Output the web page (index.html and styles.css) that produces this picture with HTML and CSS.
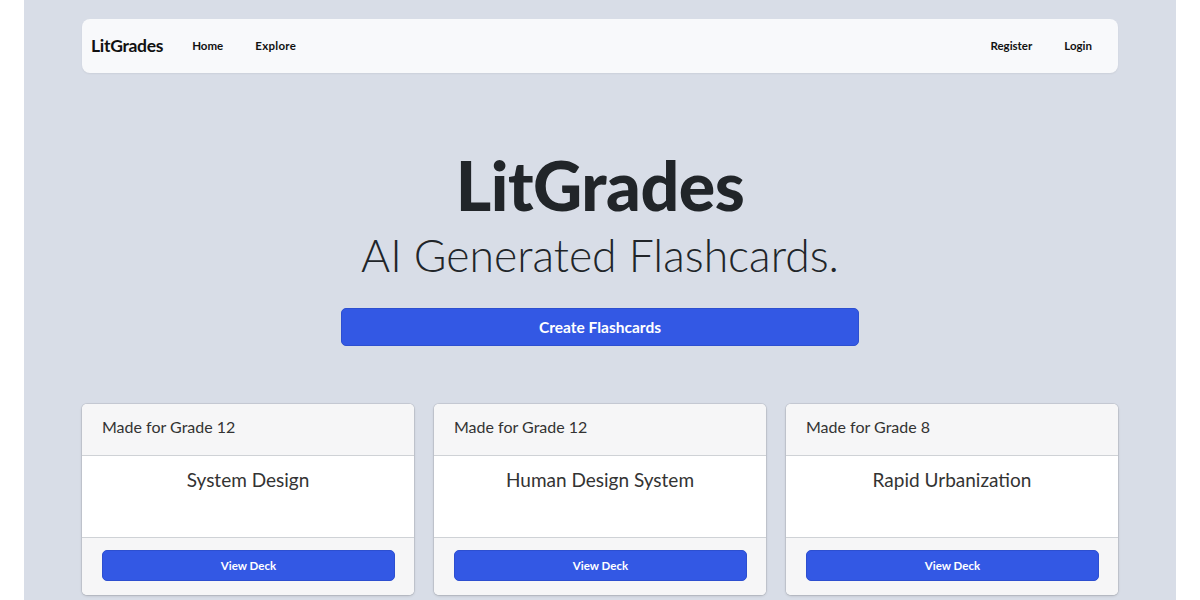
FILE: index.html
```html
<!DOCTYPE html>
<html lang="en">
<head>
<meta charset="utf-8">
<title>LitGrades</title>
<link rel="stylesheet" href="styles.css">
</head>
<body>
<div class="page">
  <div class="container">
    <nav class="navbar">
      <a class="brand" href="#">LitGrades</a>
      <ul class="nav-left">
        <li><a href="#">Home</a></li>
        <li><a href="#">Explore</a></li>
      </ul>
      <ul class="nav-right">
        <li><a href="#">Register</a></li>
        <li><a href="#">Login</a></li>
      </ul>
    </nav>

    <section class="hero">
      <h1 class="hero-title">LitGrades</h1>
      <p class="hero-sub">AI Generated Flashcards.</p>
      <a class="btn btn-lg" href="#">Create Flashcards</a>
    </section>

    <section class="cards">
      <div class="card">
        <div class="card-header">Made for Grade 12</div>
        <div class="card-body">System Design</div>
        <div class="card-footer"><a class="btn btn-sm" href="#">View Deck</a></div>
      </div>
      <div class="card">
        <div class="card-header">Made for Grade 12</div>
        <div class="card-body">Human Design System</div>
        <div class="card-footer"><a class="btn btn-sm" href="#">View Deck</a></div>
      </div>
      <div class="card">
        <div class="card-header">Made for Grade 8</div>
        <div class="card-body">Rapid Urbanization</div>
        <div class="card-footer"><a class="btn btn-sm" href="#">View Deck</a></div>
      </div>
    </section>
  </div>
</div>
</body>
</html>
```

FILE: styles.css
```css
* { box-sizing: border-box; }
html, body { margin: 0; padding: 0; background: #ffffff; }
body {
  font-family: "Lato", "Noto Sans", sans-serif;
  color: #212529;
  height: 600px;
  overflow: hidden;
}
a { text-decoration: none; color: inherit; }
ul { list-style: none; margin: 0; padding: 0; }

.page {
  margin: 0 24px;
  background: #d8dde7;
  min-height: 600px;
  padding-top: 19px;
}
.container {
  width: 1036px;
  margin: 0 auto;
}

.navbar {
  display: flex;
  align-items: center;
  height: 54px;
  background: #f8f9fb;
  border-radius: 8px;
  padding: 0 26px 2px 9px;
  box-shadow: 0 1px 2px rgba(0,0,0,0.06);
}
.brand {
  font-weight: 700;
  font-size: 17.5px;
  color: #111;
  margin-right: 29px;
  letter-spacing: -0.3px;
}
.nav-left, .nav-right {
  display: flex;
  align-items: center;
  font-size: 11.5px;
  font-weight: 700;
  color: #111;
}
.nav-left { gap: 32px; }
.nav-left li:last-child { letter-spacing: 0.3px; }
.nav-right { margin-left: auto; gap: 32px; }

.hero {
  display: flex;
  flex-direction: column;
  align-items: center;
  padding-top: 74px;
}
.hero-title {
  margin: 0;
  font-size: 68px;
  line-height: 76px;
  font-weight: 900;
  color: #212529;
  letter-spacing: -0.5px;
}
.hero-sub {
  margin: 3px 0 0;
  font-size: 44.5px;
  line-height: 58px;
  font-weight: 300;
  color: #212529;
}
.btn {
  display: flex;
  align-items: center;
  justify-content: center;
  background: #3358e4;
  color: #ffffff;
  border-radius: 5px;
  border: 1px solid #2d4fd0;
}
.btn-lg {
  margin-top: 24px;
  width: 518px;
  height: 38px;
  font-size: 15.5px;
  font-weight: 700;
}

.cards {
  display: grid;
  grid-template-columns: repeat(3, 1fr);
  gap: 20px;
  margin-top: 58px;
}
.card {
  background: #ffffff;
  border-radius: 5px;
  box-shadow: 0 0 0 1px rgba(0,0,0,0.07), 0 1px 3px rgba(0,0,0,0.15);
  overflow: hidden;
}
.card-header {
  height: 52px;
  background: #f6f6f7;
  border-bottom: 1px solid #cfd2d6;
  padding: 0 19px 6px 20px;
  display: flex;
  align-items: center;
  font-size: 16px;
  color: #333;
}
.card-body {
  height: 81px;
  display: flex;
  justify-content: center;
  padding-top: 12px;
  font-size: 19px;
  color: #333;
}
.card-footer {
  height: 58px;
  background: #f6f6f7;
  border-top: 1px solid #cfd2d6;
  padding: 12px 19px 0 20px;
}
.btn-sm {
  height: 31px;
  font-size: 11.5px;
  font-weight: 700;
}
```
